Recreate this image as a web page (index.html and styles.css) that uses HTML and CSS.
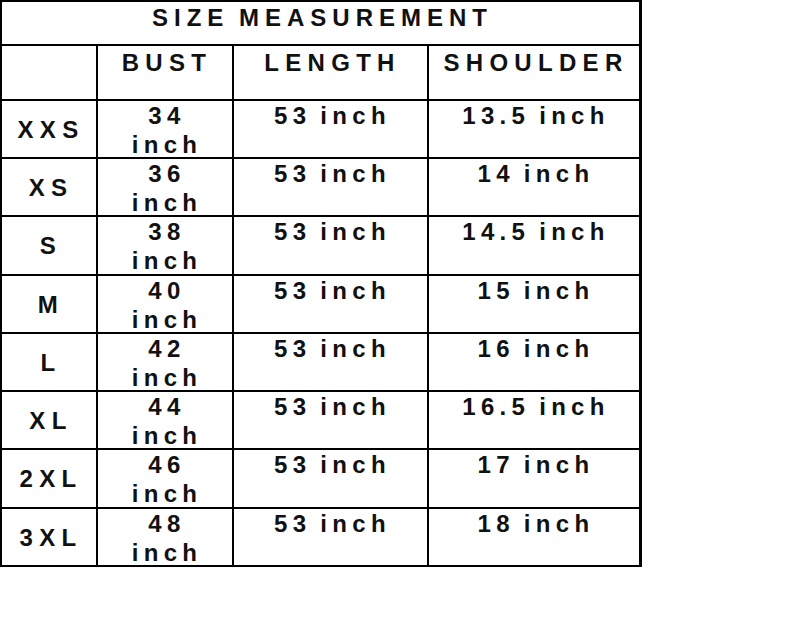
FILE: index.html
```html
<!DOCTYPE html>
<html lang="en">
<head>
<meta charset="utf-8">
<title>Size Measurement</title>
<link rel="stylesheet" href="styles.css">
</head>
<body>
<div class="chart">
  <div class="cell title last"><div class="t">SIZE MEASUREMENT</div></div>

  <div class="cell head"></div>
  <div class="cell head"><div class="t">BUST</div></div>
  <div class="cell head"><div class="t">LENGTH</div></div>
  <div class="cell head last"><div class="t">SHOULDER</div></div>

  <div class="cell size"><div class="t">XXS</div></div>
  <div class="cell data"><div class="t">34<br>inch</div></div>
  <div class="cell data"><div class="t">53 inch</div></div>
  <div class="cell data last"><div class="t">13.5 inch</div></div>

  <div class="cell size"><div class="t">XS</div></div>
  <div class="cell data"><div class="t">36<br>inch</div></div>
  <div class="cell data"><div class="t">53 inch</div></div>
  <div class="cell data last"><div class="t">14 inch</div></div>

  <div class="cell size"><div class="t">S</div></div>
  <div class="cell data"><div class="t">38<br>inch</div></div>
  <div class="cell data"><div class="t">53 inch</div></div>
  <div class="cell data last"><div class="t">14.5 inch</div></div>

  <div class="cell size"><div class="t">M</div></div>
  <div class="cell data"><div class="t">40<br>inch</div></div>
  <div class="cell data"><div class="t">53 inch</div></div>
  <div class="cell data last"><div class="t">15 inch</div></div>

  <div class="cell size"><div class="t">L</div></div>
  <div class="cell data"><div class="t">42<br>inch</div></div>
  <div class="cell data"><div class="t">53 inch</div></div>
  <div class="cell data last"><div class="t">16 inch</div></div>

  <div class="cell size"><div class="t">XL</div></div>
  <div class="cell data"><div class="t">44<br>inch</div></div>
  <div class="cell data"><div class="t">53 inch</div></div>
  <div class="cell data last"><div class="t">16.5 inch</div></div>

  <div class="cell size"><div class="t">2XL</div></div>
  <div class="cell data"><div class="t">46<br>inch</div></div>
  <div class="cell data"><div class="t">53 inch</div></div>
  <div class="cell data last"><div class="t">17 inch</div></div>

  <div class="cell size"><div class="t">3XL</div></div>
  <div class="cell data"><div class="t">48<br>inch</div></div>
  <div class="cell data"><div class="t">53 inch</div></div>
  <div class="cell data last"><div class="t">18 inch</div></div>
</div>
</body>
</html>
```

FILE: styles.css
```css
html, body {
  margin: 0;
  padding: 0;
  background: #ffffff;
}

.chart {
  display: grid;
  grid-template-columns: 96px 136px 195px 210px;
  grid-template-rows: 44px 55px 58px 58px 59px 58px 58px 58px 59px 58px;
  width: max-content;
  border-top: 2px solid #000;
  border-left: 2px solid #000;
  border-right: 3px solid #000;
  font-family: "Liberation Sans", Arial, sans-serif;
  font-weight: bold;
  font-size: 24px;
  color: #111;
  letter-spacing: 6.3px;
  word-spacing: -3px;
}

.cell {
  box-sizing: border-box;
  border-right: 2px solid #000;
  border-bottom: 2px solid #000;
  text-align: center;
  padding-left: 4px;
  overflow: visible;
}

.cell.last {
  border-right: none;
}

.t {
  line-height: 29px;
  white-space: nowrap;
}

.title {
  grid-column: 1 / -1;
  padding-top: 1px;
  letter-spacing: 6px;
}

.head {
  padding-top: 2px;
}

.data {
  padding-top: 0;
  letter-spacing: 5.3px;
  word-spacing: -3px;
}

.size {
  display: flex;
  align-items: center;
  justify-content: center;
}
```
